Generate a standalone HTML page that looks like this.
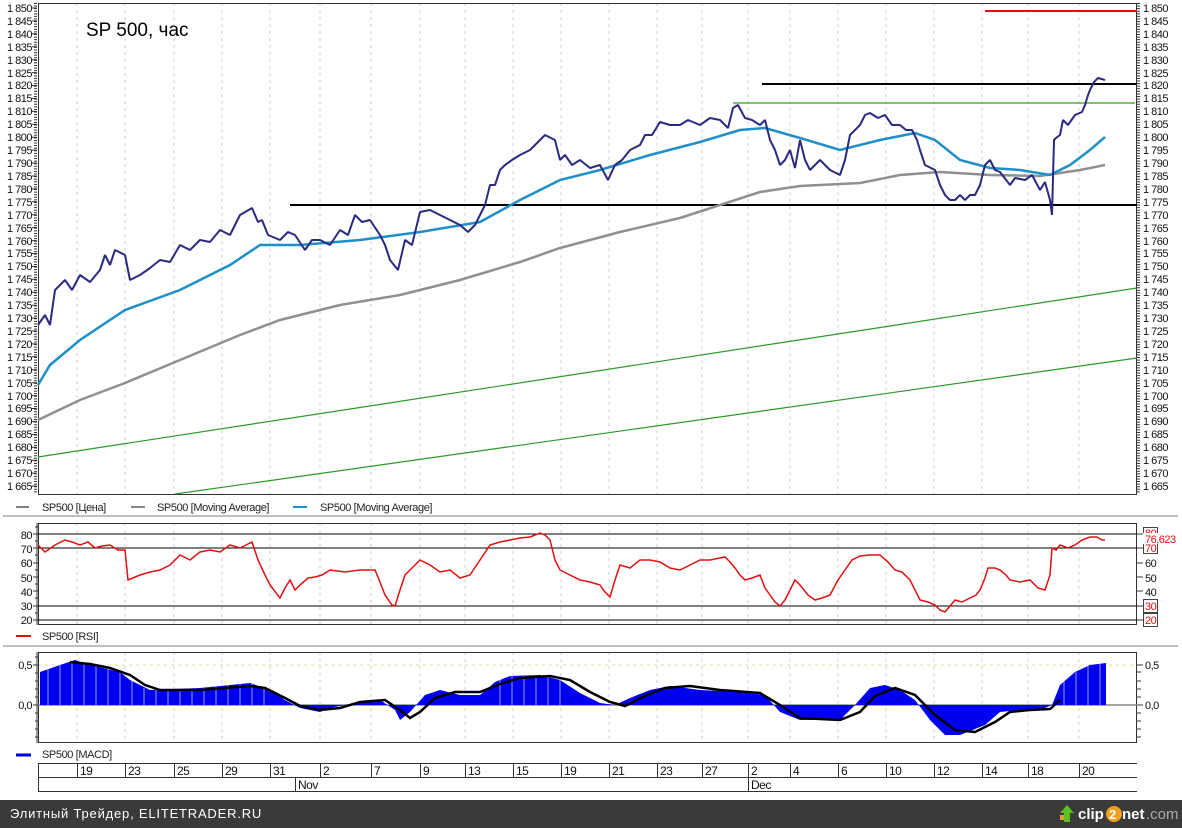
<!DOCTYPE html>
<html><head><meta charset="utf-8"><style>
html,body{margin:0;padding:0;background:#fff;width:1182px;height:828px;overflow:hidden}
svg{display:block}
text{font-family:"Liberation Sans",sans-serif}
</style></head><body>
<svg width="1182" height="828" viewBox="0 0 1182 828" xmlns="http://www.w3.org/2000/svg">
<rect width="1182" height="800" fill="#fff"/>
<g stroke="#cfcfcf" stroke-dasharray="3 4" stroke-width="1">
<path d="M77 3V494M125 3V494M174 3V494M222 3V494M270 3V494M320 3V494M371 3V494M420 3V494M465 3V494M513 3V494M561 3V494M609 3V494M657 3V494M702 3V494M748 3V494M790 3V494M838 3V494M886 3V494M934 3V494M982 3V494M1028 3V494M1079 3V494"/>
<path d="M77 523V624M125 523V624M174 523V624M222 523V624M270 523V624M320 523V624M371 523V624M420 523V624M465 523V624M513 523V624M561 523V624M609 523V624M657 523V624M702 523V624M748 523V624M790 523V624M838 523V624M886 523V624M934 523V624M982 523V624M1028 523V624M1079 523V624"/>
<path d="M77 652V742M125 652V742M174 652V742M222 652V742M270 652V742M320 652V742M371 652V742M420 652V742M465 652V742M513 652V742M561 652V742M609 652V742M657 652V742M702 652V742M748 652V742M790 652V742M838 652V742M886 652V742M934 652V742M982 652V742M1028 652V742M1079 652V742"/>
<path d="M38 665H1137" stroke="#e0d8a8"/>
</g>
<rect x="38.5" y="3.5" width="1098" height="491" fill="none" stroke="#333"/>
<path d="M35.5 3V494M1138.5 3V494" stroke="#333" stroke-width="3" stroke-dasharray="1 1.584"/>
<path d="M32 8H37M32 20.9H37M32 33.8H37M32 46.8H37M32 59.7H37M32 72.6H37M32 85.5H37M32 98.4H37M32 111.4H37M32 124.3H37M32 137.2H37M32 150.1H37M32 163H37M32 176H37M32 188.9H37M32 201.8H37M32 214.7H37M32 227.6H37M32 240.6H37M32 253.5H37M32 266.4H37M32 279.3H37M32 292.2H37M32 305.2H37M32 318.1H37M32 331H37M32 343.9H37M32 356.8H37M32 369.8H37M32 382.7H37M32 395.6H37M32 408.5H37M32 421.4H37M32 434.4H37M32 447.3H37M32 460.2H37M32 473.1H37M32 486H37" stroke="#333"/>
<text x="86" y="36" font-size="19">SP 500, час</text>
<path d="M38 457L1137 288M175 494L1137 358" stroke="#2a9a2a" stroke-width="1.2" fill="none"/>
<path d="M733 103H1135" stroke="#5aaa4a" stroke-width="1.5"/>
<path d="M290 205H1137M762 84H1137" stroke="#000" stroke-width="2"/>
<path d="M985 11H1137" stroke="#e01010" stroke-width="2"/>
<polyline fill="none" stroke="#909090" stroke-width="2.5" points="38,420 80,400 125,383 180,360 240,335 280,320 340,305 400,295 460,280 520,262 560,248 620,232 680,218 720,205 760,192 800,186 860,183 900,175 940,172 990,175 1040,176 1080,170 1105,165"/>
<polyline fill="none" stroke="#1e8fc8" stroke-width="2.5" points="38,385 50,365 80,340 125,310 180,290 230,265 260,245 300,245 360,240 420,232 480,222 520,200 560,180 600,170 650,155 700,142 740,130 765,128 800,138 840,150 880,140 915,133 935,140 960,160 990,168 1020,170 1050,175 1070,165 1090,150 1105,137"/>
<polyline fill="none" stroke="#2a2a80" stroke-width="2" stroke-linejoin="bevel" points="38,325 45,315 50,325 55,290 65,280 72,290 80,275 90,282 100,270 105,255 110,265 115,250 125,255 130,280 140,275 150,268 160,260 170,262 180,245 190,250 200,240 210,242 220,230 230,235 240,215 252,208 258,222 262,220 268,235 280,240 288,232 295,235 305,250 312,240 320,240 330,245 340,230 348,235 355,215 362,222 370,220 380,235 385,245 390,260 398,270 405,240 412,245 420,212 430,210 440,215 450,220 460,225 468,232 475,225 485,205 490,185 495,185 500,170 505,165 512,160 520,155 530,150 540,140 545,135 555,140 560,160 565,155 572,165 580,160 590,168 600,165 608,180 615,165 622,160 630,150 640,145 645,135 652,135 660,122 670,125 680,125 688,120 700,125 710,118 720,120 728,128 733,108 738,105 745,118 752,120 760,125 765,120 770,140 775,150 780,165 785,160 790,150 795,168 800,140 805,160 810,170 815,165 820,160 830,170 840,175 845,160 850,135 855,130 860,125 865,115 870,113 878,118 885,115 892,125 900,125 906,130 912,130 917,140 920,150 925,165 935,170 940,185 945,195 950,200 955,200 960,195 965,200 970,195 975,195 980,185 985,165 990,160 995,170 1000,172 1010,185 1015,178 1025,180 1032,175 1040,190 1045,182 1050,200 1052,215 1054,140 1056,138 1060,135 1063,120 1068,125 1075,115 1082,112 1085,105 1088,95 1090,90 1094,82 1098,78 1105,80"/>
<g font-size="11" text-anchor="end" fill="#111" letter-spacing="-0.5">
<text x="32" y="12">1 850</text><text x="32" y="25">1 845</text><text x="32" y="38">1 840</text><text x="32" y="51">1 835</text><text x="32" y="64">1 830</text><text x="32" y="77">1 825</text><text x="32" y="89">1 820</text><text x="32" y="102">1 815</text><text x="32" y="115">1 810</text><text x="32" y="128">1 805</text><text x="32" y="141">1 800</text><text x="32" y="154">1 795</text><text x="32" y="167">1 790</text><text x="32" y="180">1 785</text><text x="32" y="193">1 780</text><text x="32" y="206">1 775</text><text x="32" y="219">1 770</text><text x="32" y="232">1 765</text><text x="32" y="245">1 760</text><text x="32" y="257">1 755</text><text x="32" y="270">1 750</text><text x="32" y="283">1 745</text><text x="32" y="296">1 740</text><text x="32" y="309">1 735</text><text x="32" y="322">1 730</text><text x="32" y="335">1 725</text><text x="32" y="348">1 720</text><text x="32" y="361">1 715</text><text x="32" y="374">1 710</text><text x="32" y="387">1 705</text><text x="32" y="400">1 700</text><text x="32" y="412">1 695</text><text x="32" y="425">1 690</text><text x="32" y="438">1 685</text><text x="32" y="451">1 680</text><text x="32" y="464">1 675</text><text x="32" y="477">1 670</text><text x="32" y="490">1 665</text>
</g>
<g font-size="11" fill="#111" letter-spacing="-0.5">
<text x="1143" y="12">1 850</text><text x="1143" y="25">1 845</text><text x="1143" y="38">1 840</text><text x="1143" y="51">1 835</text><text x="1143" y="64">1 830</text><text x="1143" y="77">1 825</text><text x="1143" y="89">1 820</text><text x="1143" y="102">1 815</text><text x="1143" y="115">1 810</text><text x="1143" y="128">1 805</text><text x="1143" y="141">1 800</text><text x="1143" y="154">1 795</text><text x="1143" y="167">1 790</text><text x="1143" y="180">1 785</text><text x="1143" y="193">1 780</text><text x="1143" y="206">1 775</text><text x="1143" y="219">1 770</text><text x="1143" y="232">1 765</text><text x="1143" y="245">1 760</text><text x="1143" y="257">1 755</text><text x="1143" y="270">1 750</text><text x="1143" y="283">1 745</text><text x="1143" y="296">1 740</text><text x="1143" y="309">1 735</text><text x="1143" y="322">1 730</text><text x="1143" y="335">1 725</text><text x="1143" y="348">1 720</text><text x="1143" y="361">1 715</text><text x="1143" y="374">1 710</text><text x="1143" y="387">1 705</text><text x="1143" y="400">1 700</text><text x="1143" y="412">1 695</text><text x="1143" y="425">1 690</text><text x="1143" y="438">1 685</text><text x="1143" y="451">1 680</text><text x="1143" y="464">1 675</text><text x="1143" y="477">1 670</text><text x="1143" y="490">1 665</text>
</g>
<g font-size="11" fill="#222" letter-spacing="-0.4">
<path d="M16 507H29" stroke="#000"/><text x="42" y="511">SP500 [Цена]</text>
<path d="M131 507H145" stroke="#888" stroke-width="2"/><text x="157" y="511">SP500 [Moving Average]</text>
<path d="M293 507H307" stroke="#1e8fc8" stroke-width="2"/><text x="320" y="511">SP500 [Moving Average]</text>
<text x="42" y="640">SP500 [RSI]</text><path d="M16 636H31" stroke="#e01010" stroke-width="2"/>
<text x="42" y="758">SP500 [MACD]</text><path d="M16 755H31" stroke="#0000e0" stroke-width="3"/>
</g>
<path d="M3 516H1178M3 646H1178" stroke="#aaa" stroke-width="1.5"/>
<rect x="38.5" y="523.5" width="1098" height="101" fill="none" stroke="#333"/>
<path d="M38 534H1137M38 548H1137M38 606H1137M38 620H1137" stroke="#000"/>
<path d="M33 534H38M33 548H38M33 563H38M33 577H38M33 591H38M33 606H38M33 620H38M35 527H38M35 541H38M35 555H38M35 570H38M35 584H38M35 598H38M35 613H38M37 523V625" stroke="#333"/>
<path d="M1137 534H1143M1137 548H1143M1137 563H1143M1137 577H1143M1137 591H1143M1137 606H1143M1137 620H1143" stroke="#333"/>
<polyline fill="none" stroke="#e01010" stroke-width="1.5" points="38,545 45,552 55,545 65,540 72,542 80,545 88,542 95,548 102,546 110,545 118,550 125,550 128,580 140,575 150,572 160,570 170,565 180,555 190,560 200,552 210,550 220,552 230,545 240,548 252,542 258,560 265,575 270,585 280,598 285,588 290,580 295,590 300,585 308,578 315,577 322,575 330,570 345,572 360,570 375,570 380,582 385,595 392,605 395,606 400,590 405,575 412,568 420,560 430,565 440,572 450,570 460,578 470,575 480,560 490,545 500,542 510,540 520,538 530,537 540,533 545,535 550,540 555,560 560,570 570,575 580,580 590,582 600,585 605,592 610,597 615,580 620,565 630,568 640,560 650,560 660,562 670,568 680,570 690,565 700,560 710,560 725,557 730,562 735,568 740,575 745,580 752,578 760,575 765,588 770,595 775,602 780,606 785,600 790,590 795,580 800,585 808,595 815,600 822,598 830,595 838,580 845,570 852,560 860,556 870,555 880,555 888,562 895,570 902,572 910,580 915,590 920,600 928,602 935,605 940,610 945,612 950,606 955,600 962,602 970,598 976,595 980,590 985,578 988,568 995,568 1000,570 1006,575 1010,580 1020,582 1030,580 1038,588 1045,590 1050,575 1052,548 1056,550 1060,545 1068,548 1075,545 1082,540 1090,537 1097,537 1102,540 1105,540"/>
<g font-size="11" fill="#111" letter-spacing="-0.5">
<text x="32" y="539" text-anchor="end">80</text><text x="32" y="553" text-anchor="end">70</text><text x="32" y="567" text-anchor="end">60</text><text x="32" y="582" text-anchor="end">50</text><text x="32" y="596" text-anchor="end">40</text><text x="32" y="610" text-anchor="end">30</text><text x="32" y="624" text-anchor="end">20</text>
<text x="1145" y="567">60</text><text x="1145" y="582">50</text><text x="1145" y="596">40</text>
</g>
<g font-size="11" fill="#e01010" letter-spacing="-0.5">
<rect x="1143.5" y="527.5" width="14" height="11" fill="#fff" stroke="#444"/><text x="1145" y="537">80</text>
<rect x="1143.5" y="541.5" width="14" height="12" fill="#fff" stroke="#444"/><text x="1145" y="552">70</text>
<rect x="1143.5" y="599.5" width="14" height="13" fill="#fff" stroke="#444"/><text x="1145" y="610">30</text>
<rect x="1143.5" y="613.5" width="14" height="13" fill="#fff" stroke="#444"/><text x="1145" y="624">20</text>
<rect x="1143" y="533" width="39" height="11" fill="#fff"/><text x="1145" y="543">76,623</text>
</g>
<rect x="38.5" y="652.5" width="1098" height="90" fill="none" stroke="#333"/>
<path d="M33 665H38M33 705H38M35 657H38M35 673H38M35 681H38M35 689H38M35 697H38M35 713H38M35 721H38M35 729H38M35 737H38M37 652V743" stroke="#333"/>
<path d="M1137 665H1143M1137 705H1143M1137 672H1141M1137 681H1141M1137 689H1141M1137 697H1141M1137 713H1141M1137 721H1141M1137 729H1141M1137 737H1141" stroke="#333"/>
<path d="M38 705H1137" stroke="#888" stroke-width="1.5"/>
<polygon fill="#0000f0" points="40,705 40,672 60,665 75,660 90,665 120,672 130,680 150,690 200,688 250,683 270,690 285,700 300,708 320,712 330,708 360,702 380,700 395,710 400,720 410,712 425,695 440,690 460,695 480,695 495,682 510,676 540,675 560,680 580,693 600,703 615,705 630,698 650,690 670,686 700,690 740,692 765,695 780,712 800,720 840,720 855,705 870,688 885,685 900,690 915,700 930,720 945,735 960,735 985,725 1000,712 1020,710 1040,710 1052,705 1060,685 1075,672 1090,665 1106,663 1106,705"/>
<g stroke="#ffffff" stroke-width="1" opacity="0.6">
<path d="M48 665V705M60 665V705M72 660V705M84 660V705M96 665V705M108 668V705M120 670V705M132 680V705M144 688V705M156 690V705M168 690V705M180 690V705M192 690V705M204 688V705M216 686V705M228 684V705M240 684V705M252 684V705M264 688V705M500 680V705M512 676V705M524 676V705M536 676V705M548 676V705M560 680V705M1064 680V705M1076 672V705M1088 665V705M1100 663V705"/>
</g>
<polyline fill="none" stroke="#000" stroke-width="2.5" points="70,662 90,664 110,668 130,675 145,685 160,690 200,690 250,686 265,688 285,698 300,706 320,710 340,708 360,702 385,700 400,710 410,718 420,712 435,698 455,692 480,692 500,684 520,678 550,676 570,680 590,692 610,702 625,706 645,696 665,688 690,686 720,690 760,693 780,705 800,718 840,720 860,712 875,696 895,688 915,695 935,715 955,730 975,732 995,722 1010,712 1030,710 1050,709 1060,700"/>
<g font-size="11" fill="#111" letter-spacing="-0.5">
<text x="32" y="669" text-anchor="end">0,5</text><text x="32" y="709" text-anchor="end">0,0</text>
<text x="1145" y="669">0,5</text><text x="1145" y="709">0,0</text>
</g>
<g stroke="#333" fill="none">
<path d="M38.5 763.5H1137M38.5 777.5H1137M38.5 791.5H1137M38.5 763V792"/>
<path d="M77.5 763V777M125.5 763V777M174.5 763V777M222.5 763V777M270.5 763V777M320.5 763V777M371.5 763V777M420.5 763V777M465.5 763V777M513.5 763V777M561.5 763V777M609.5 763V777M657.5 763V777M702.5 763V777M748.5 763V777M790.5 763V777M838.5 763V777M886.5 763V777M934.5 763V777M982.5 763V777M1028.5 763V777M1079.5 763V777M295.5 777V792M748.5 777V792"/>
</g>
<g font-size="12" fill="#111" letter-spacing="-0.5">
<text x="80" y="775">19</text><text x="128" y="775">23</text><text x="177" y="775">25</text><text x="225" y="775">29</text><text x="273" y="775">31</text><text x="323" y="775">2</text><text x="374" y="775">7</text><text x="423" y="775">9</text><text x="468" y="775">13</text><text x="516" y="775">15</text><text x="564" y="775">19</text><text x="612" y="775">21</text><text x="660" y="775">23</text><text x="705" y="775">27</text><text x="751" y="775">2</text><text x="793" y="775">4</text><text x="841" y="775">6</text><text x="889" y="775">10</text><text x="937" y="775">12</text><text x="985" y="775">14</text><text x="1031" y="775">18</text><text x="1082" y="775">20</text>
<text x="298" y="789">Nov</text><text x="751" y="789">Dec</text>
</g>
<rect x="0" y="800" width="1182" height="28" fill="#3a3a3a"/>
<text x="10" y="818" font-size="13" fill="#fff" letter-spacing="0.8">Элитный Трейдер, ELITETRADER.RU</text>
<path d="M1060 820V815H1068V820Z" fill="#e0a020"/><path d="M1064 822V813H1060L1067 805L1074 813H1070V822Z" fill="#5cc020"/>
<text x="1078" y="819" font-size="15" font-weight="bold" fill="#fff">clip</text>
<circle cx="1114" cy="814" r="8" fill="#f0a020"/><text x="1109" y="819" font-size="13" font-weight="bold" fill="#fff">2</text>
<text x="1122" y="819" font-size="15" font-weight="bold" fill="#fff">net</text><text x="1146" y="819" font-size="15" fill="#aaa">.com</text>
</svg>
</body></html>
